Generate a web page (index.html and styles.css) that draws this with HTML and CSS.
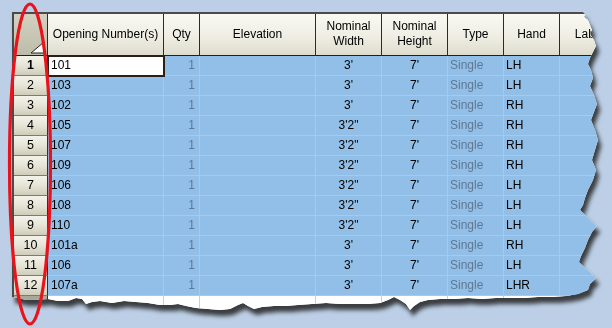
FILE: index.html
```html
<!DOCTYPE html>
<html>
<head>
<meta charset="utf-8">
<link rel="stylesheet" href="styles.css">
</head>
<body>
<div class="page">
  <div class="shadow">
    <div class="paper">
      <div class="sheet">
        <div class="row head">
          <div class="corner"><svg width="16" height="13" viewBox="0 0 16 13"><polygon points="1,12 14,1 14,12" fill="#fff" stroke="#222" stroke-width="1"/></svg></div>
          <div class="hc">Opening Number(s)</div>
          <div class="hc">Qty</div>
          <div class="hc">Elevation</div>
          <div class="hc">Nominal<br>Width</div>
          <div class="hc">Nominal<br>Height</div>
          <div class="hc">Type</div>
          <div class="hc">Hand</div>
          <div class="hc">Label</div>
        </div>
        <div class="row"><div class="rh bold">1</div><div class="c num active">101</div><div class="c qty">1</div><div class="c"></div><div class="c ctr">3'</div><div class="c ctr">7'</div><div class="c typ">Single</div><div class="c hand">LH</div><div class="c"></div></div>
        <div class="row"><div class="rh">2</div><div class="c num">103</div><div class="c qty">1</div><div class="c"></div><div class="c ctr">3'</div><div class="c ctr">7'</div><div class="c typ">Single</div><div class="c hand">LH</div><div class="c"></div></div>
        <div class="row"><div class="rh">3</div><div class="c num">102</div><div class="c qty">1</div><div class="c"></div><div class="c ctr">3'</div><div class="c ctr">7'</div><div class="c typ">Single</div><div class="c hand">RH</div><div class="c"></div></div>
        <div class="row"><div class="rh">4</div><div class="c num">105</div><div class="c qty">1</div><div class="c"></div><div class="c ctr">3'2"</div><div class="c ctr">7'</div><div class="c typ">Single</div><div class="c hand">RH</div><div class="c"></div></div>
        <div class="row"><div class="rh">5</div><div class="c num">107</div><div class="c qty">1</div><div class="c"></div><div class="c ctr">3'2"</div><div class="c ctr">7'</div><div class="c typ">Single</div><div class="c hand">RH</div><div class="c"></div></div>
        <div class="row"><div class="rh">6</div><div class="c num">109</div><div class="c qty">1</div><div class="c"></div><div class="c ctr">3'2"</div><div class="c ctr">7'</div><div class="c typ">Single</div><div class="c hand">RH</div><div class="c"></div></div>
        <div class="row"><div class="rh">7</div><div class="c num">106</div><div class="c qty">1</div><div class="c"></div><div class="c ctr">3'2"</div><div class="c ctr">7'</div><div class="c typ">Single</div><div class="c hand">LH</div><div class="c"></div></div>
        <div class="row"><div class="rh">8</div><div class="c num">108</div><div class="c qty">1</div><div class="c"></div><div class="c ctr">3'2"</div><div class="c ctr">7'</div><div class="c typ">Single</div><div class="c hand">LH</div><div class="c"></div></div>
        <div class="row"><div class="rh">9</div><div class="c num">110</div><div class="c qty">1</div><div class="c"></div><div class="c ctr">3'2"</div><div class="c ctr">7'</div><div class="c typ">Single</div><div class="c hand">LH</div><div class="c"></div></div>
        <div class="row"><div class="rh">10</div><div class="c num">101a</div><div class="c qty">1</div><div class="c"></div><div class="c ctr">3'</div><div class="c ctr">7'</div><div class="c typ">Single</div><div class="c hand">RH</div><div class="c"></div></div>
        <div class="row"><div class="rh">11</div><div class="c num">106</div><div class="c qty">1</div><div class="c"></div><div class="c ctr">3'</div><div class="c ctr">7'</div><div class="c typ">Single</div><div class="c hand">LH</div><div class="c"></div></div>
        <div class="row"><div class="rh">12</div><div class="c num">107a</div><div class="c qty">1</div><div class="c"></div><div class="c ctr">3'</div><div class="c ctr">7'</div><div class="c typ">Single</div><div class="c hand">LHR</div><div class="c"></div></div>
        <div class="row blank"><div class="rh"></div><div class="c"></div><div class="c"></div><div class="c"></div><div class="c"></div><div class="c"></div><div class="c"></div><div class="c"></div><div class="c"></div></div>
      </div>
    </div>
  </div>
  <svg class="mark" width="612" height="328" viewBox="0 0 612 328"><ellipse cx="30" cy="164" rx="20.5" ry="160" fill="none" stroke="#e8131b" stroke-width="3.2"/></svg>
</div>
</body>
</html>
```
FILE: styles.css
```css
html, body {
  margin: 0;
  padding: 0;
}
body {
  background: #bccfe6;
  font-family: "Liberation Sans", Arial, sans-serif;
  font-size: 12px;
  color: #000;
}
.page {
  position: relative;
  width: 612px;
  height: 328px;
  overflow: hidden;
}
.shadow {
  filter: drop-shadow(3px 6px 2px rgba(35, 35, 35, 0.85));
}
.paper {
  width: 612px;
  height: 328px;
  padding: 12px 0 0 12px;
  box-sizing: border-box;
  clip-path: polygon(12px 12px, 583px 12px, 585px 14px, 584px 17px, 588px 20px, 590px 25px, 592px 30px, 590px 34px, 594px 40px, 596px 46px, 593px 52px, 590px 58px, 588px 64px, 591px 70px, 593px 78px, 590px 86px, 594px 95px, 597px 104px, 594px 112px, 591px 120px, 595px 130px, 598px 140px, 595px 150px, 592px 160px, 596px 170px, 593px 180px, 588px 190px, 585px 198px, 583px 205px, 580px 210px, 586px 216px, 592px 222px, 597px 226px, 592px 232px, 588px 240px, 585px 248px, 581px 256px, 579px 262px, 585px 268px, 592px 274px, 596px 278px, 590px 284px, 588px 290px, 578px 294px, 566px 296px, 552px 297px, 538px 297px, 524px 298px, 510px 298px, 496px 298px, 482px 299px, 468px 298px, 454px 299px, 440px 299px, 428px 300px, 420px 302px, 414px 306px, 410px 310px, 406px 304px, 400px 300px, 394px 297px, 388px 300px, 380px 303px, 368px 304px, 354px 304px, 340px 304px, 326px 303px, 312px 304px, 298px 305px, 286px 306px, 274px 306px, 262px 307px, 254px 309px, 248px 306px, 243px 303px, 238px 305px, 230px 309px, 220px 310px, 208px 309px, 196px 308px, 186px 306px, 178px 304px, 170px 305px, 160px 305px, 148px 303px, 136px 302px, 124px 301px, 112px 303px, 100px 301px, 92px 302px, 86px 304px, 82px 299px, 76px 298px, 68px 301px, 58px 301px, 48px 299px, 36px 300px, 26px 300px, 18px 298px, 12px 297px);
}
.sheet {
  width: 600px;
  height: 316px;
  overflow: hidden;
  background: #fff;
  border-top: 2px solid #4b4b4b;
  border-left: 2px solid #4b4b4b;
  box-sizing: border-box;
}
.row {
  display: grid;
  grid-template-columns: 34px 116px 36px 116px 66px 66px 56px 56px 60px;
  height: 20px;
}
.row.head {
  height: 42px;
}
.row > div {
  box-sizing: border-box;
  overflow: hidden;
  white-space: nowrap;
}
.corner {
  background: linear-gradient(to bottom, #d3d2c2, #bdbcaa);
  border-right: 1px solid #2b2b2b;
  border-bottom: 1px solid #1e1e1e;
  display: flex;
  align-items: flex-end;
  justify-content: flex-end;
  padding: 0 1px 1px 0;
}
.corner svg {
  display: block;
}
.hc {
  background: linear-gradient(to bottom, #f9f8f2 0%, #efeee4 55%, #dddccc 100%);
  border-right: 1px solid #2b2b2b;
  border-bottom: 1px solid #1e1e1e;
  display: flex;
  align-items: center;
  justify-content: center;
  text-align: center;
  line-height: 15px;
  padding-bottom: 1px;
}
.rh {
  background: linear-gradient(to bottom, #f4f3ea 0%, #e6e4d6 50%, #cfcdb9 100%);
  border-right: 1px solid #2f2f2f;
  border-bottom: 1px solid #7d7b6a;
  text-align: center;
  line-height: 19px;
  font-size: 12.5px;
}
.rh.bold {
  font-weight: bold;
}
.c {
  background: #92bfe8;
  border-right: 1px solid #c8c3b8;
  border-bottom: 1px solid #c8c3b8;
  line-height: 19px;
  padding: 0 3px 0 2px;
}
.num {
  padding-left: 3px;
}
.active {
  background: #fff;
  position: relative;
  z-index: 1;
  outline: 2px solid #2a1e16;
  outline-offset: -1px;
}
.qty {
  text-align: right;
  color: #5f7891;
  padding-right: 4px;
}
.ctr {
  text-align: center;
  padding: 0;
}
.typ {
  color: #5f7891;
}
.blank .c {
  background: #fff;
  border-bottom: none;
  border-right: 1px solid #cfcfcf;
}
.blank .rh {
  background: #a9a899;
  border-bottom: none;
}
.mark {
  position: absolute;
  left: 0;
  top: 0;
  pointer-events: none;
}
```
